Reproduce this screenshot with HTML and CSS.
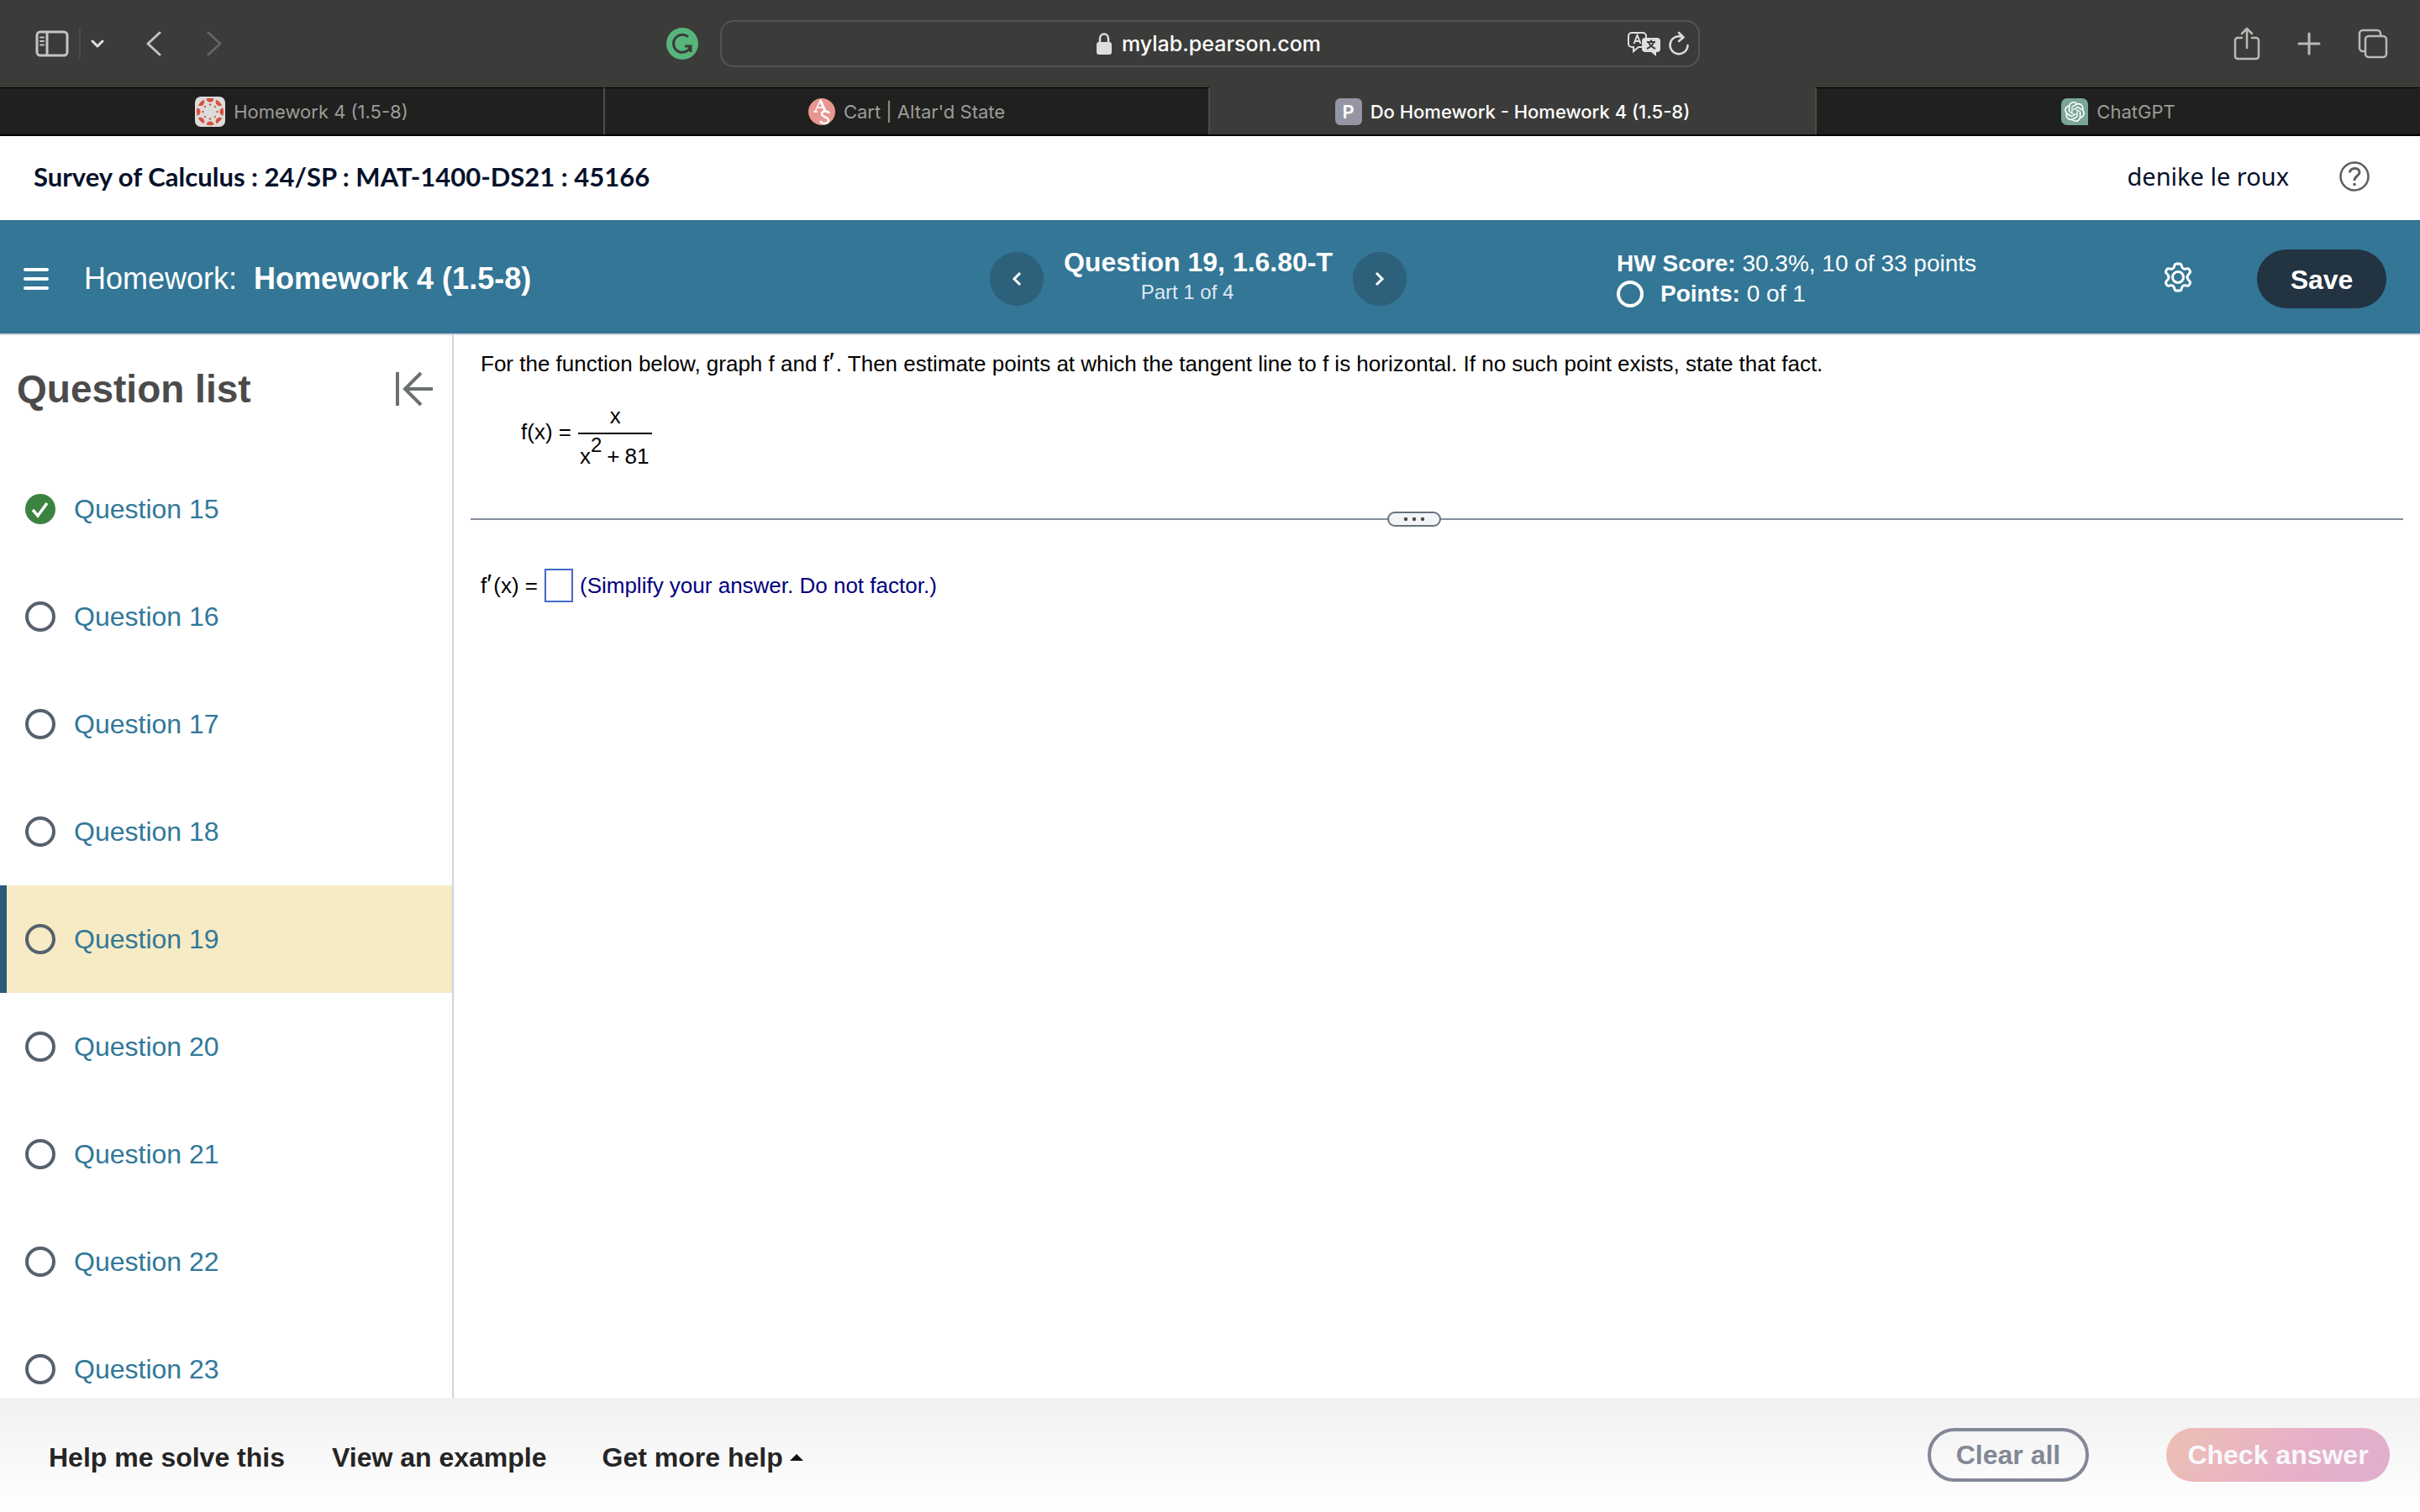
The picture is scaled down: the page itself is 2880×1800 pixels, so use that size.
FILE: index.html
```html
<!DOCTYPE html>
<html lang="en">
<head>
<meta charset="utf-8">
<title>Do Homework - Homework 4 (1.5-8)</title>
<link rel="stylesheet" href="styles.css">
</head>
<body>
<div class="browser">
  <div class="toolbar">
    <div class="toolbar-left">
      <button class="icon-btn" aria-label="Sidebar"><svg width="40" height="32" viewBox="0 0 40 32" fill="none" stroke="#c4c4c3" stroke-width="3"><rect x="2" y="2" width="36" height="28" rx="4"/><path d="M14 2v28"/><path d="M6 8.500h4M6 13h4M6 17.500h4" stroke-width="2" stroke-linecap="round"/></svg></button>
      <span class="toolbar-rule"></span>
      <button class="icon-btn" aria-label="Tab groups"><svg width="16" height="12" viewBox="0 0 16 12" fill="none" stroke="#e0e0df" stroke-width="3" stroke-linecap="round" stroke-linejoin="round"><path d="M2 3l6 6 6-6"/></svg></button>
      <button class="icon-btn back" aria-label="Back"><svg width="18" height="30" viewBox="0 0 18 30" fill="none" stroke="#c4c4c3" stroke-width="3" stroke-linecap="round" stroke-linejoin="round"><path d="M16 2L2 15l14 13"/></svg></button>
      <button class="icon-btn forward" aria-label="Forward"><svg width="18" height="30" viewBox="0 0 18 30" fill="none" stroke="#636362" stroke-width="3" stroke-linecap="round" stroke-linejoin="round"><path d="M2 2l14 13L2 28"/></svg></button>
      <button class="icon-btn grammar" aria-label="Grammarly"><svg width="38" height="38" viewBox="0 0 38 38"><circle cx="19" cy="19" r="19" fill="#57b57b"/><path d="M26 11a10.500 10.500 0 1 0 3 11h-7M29 22v7" fill="none" stroke="#3b3b39" stroke-width="3"/></svg></button>
    </div>
    <div class="address">
      <span></span>
      <label class="address-site">
        <svg width="18" height="26" viewBox="0 0 18 26"><rect y="11" width="18" height="15" rx="3" fill="#dededd"/><path d="M4 12V7a5 5.500 0 0 1 10 0v5" fill="none" stroke="#dededd" stroke-width="2.500"/></svg>
        <input class="address-input" aria-label="Address" value="mylab.pearson.com">
      </label>
      <div class="address-tools">
        <button class="icon-btn" aria-label="Translate"><svg width="40" height="30" viewBox="0 0 40 30"><path d="M5 2h13a4 4 0 0 1 4 4v4M5 2a4 4 0 0 0-4 4v9a4 4 0 0 0 4 4h2v5l6-5h4" fill="none" stroke="#dededd" stroke-width="2"/><path d="M7.500 15L11.500 5l4 10M9 12h5" fill="none" stroke="#dededd" stroke-width="2"/><path d="M21 8h14a4 4 0 0 1 4 4v9a4 4 0 0 1-4 4h-1v5l-6-5h-7a4 4 0 0 1-4-4v-9a4 4 0 0 1 4-4z" fill="#dededd"/><path d="M23 13h10M28 10.500V13M31 13c-1 4-4 6-8 8M25 13c1 4 4 6 8 8" fill="none" stroke="#3b3b39" stroke-width="2"/></svg></button>
        <button class="icon-btn" aria-label="Reload"><svg width="26" height="30" viewBox="0 0 26 30" fill="none" stroke="#dededd" stroke-width="2.500" stroke-linecap="round" stroke-linejoin="round"><path d="M23.500 17A10.500 10.500 0 1 1 18 7.500M13 2l5.500 5.500L13 12"/></svg></button>
      </div>
    </div>
    <div class="toolbar-right">
      <button class="icon-btn" aria-label="Share"><svg width="32" height="40" viewBox="0 0 32 40" fill="none" stroke="#b9b9b8" stroke-width="2.500" stroke-linecap="round" stroke-linejoin="round"><path d="M10 13H5a3 3 0 0 0-3 3v19a3 3 0 0 0 3 3h22a3 3 0 0 0 3-3V16a3 3 0 0 0-3-3h-5M16 25V2M10 8l6-6 6 6"/></svg></button>
      <button class="icon-btn" aria-label="New tab"><svg width="28" height="28" viewBox="0 0 28 28" fill="none" stroke="#b9b9b8" stroke-width="3" stroke-linecap="round"><path d="M14 2v24M2 14h24"/></svg></button>
      <button class="icon-btn" aria-label="Show tabs"><svg width="36" height="36" viewBox="0 0 36 36" fill="none" stroke="#b9b9b8" stroke-width="2.500"><rect x="9" y="9" width="25" height="25" rx="4"/><path d="M9 27H6a4 4 0 0 1-4-4V6a4 4 0 0 1 4-4h17a4 4 0 0 1 4 4v3"/></svg></button>
    </div>
  </div>
  <nav class="tabs" aria-label="Tabs">
    <a class="tab" href="#t1"><svg width="36" height="36" viewBox="0 0 36 36"><rect width="36" height="36" rx="7" fill="#dcdcda"/><g fill="#d9503c"><g id="petal"><path d="M13.500 2.500a15.500 15.500 0 0 1 9 0a4.500 4 0 0 1-9 0z"/><circle cx="18" cy="9.500" r="1.200"/></g><use href="#petal" transform="rotate(45 18 18)"/><use href="#petal" transform="rotate(90 18 18)"/><use href="#petal" transform="rotate(135 18 18)"/><use href="#petal" transform="rotate(180 18 18)"/><use href="#petal" transform="rotate(225 18 18)"/><use href="#petal" transform="rotate(270 18 18)"/><use href="#petal" transform="rotate(315 18 18)"/></g></svg><span>Homework 4 (1.5-8)</span></a>
    <a class="tab" href="#t2"><svg width="32" height="32" viewBox="0 0 32 32"><circle cx="16" cy="16" r="16" fill="#e8968f"/><g fill="none" stroke="#fff"><path d="M8 16l6-13" stroke-width="1.500"/><path d="M14 2l6 13" stroke-width="3"/><path d="M10 11h7M6 16h5M17 16h6" stroke-width="1.500"/><path d="M25 18c-2-4-10-3-9 1 1 4 9 3 8 8-1 4-8 4-10 0" stroke-width="2.500"/></g></svg><span>Cart | Altar'd State</span></a>
    <a class="tab tab-active" href="#t3"><span class="favicon-p">P</span><span>Do Homework - Homework 4 (1.5-8)</span></a>
    <a class="tab" href="#t4"><svg width="32" height="32" viewBox="0 0 32 32"><path d="M7 0h18a7 7 0 0 1 7 7v25H7a7 7 0 0 1-7-7V7a7 7 0 0 1 7-7z" fill="#7ba697"/><g transform="translate(4 4)" fill="#fff"><path d="M22.282 9.821a5.985 5.985 0 0 0-.516-4.910 6.046 6.046 0 0 0-6.510-2.900A6.065 6.065 0 0 0 4.981 4.182a5.985 5.985 0 0 0-3.998 2.900 6.046 6.046 0 0 0 .743 7.097 5.980 5.980 0 0 0 .510 4.911 6.051 6.051 0 0 0 6.515 2.900A5.985 5.985 0 0 0 13.260 24a6.056 6.056 0 0 0 5.772-4.206 5.990 5.990 0 0 0 3.997-2.900 6.056 6.056 0 0 0-.747-7.073zM13.260 22.430a4.476 4.476 0 0 1-2.876-1.040l.141-.081 4.779-2.758a.795.795 0 0 0 .392-.681v-6.737l2.020 1.168a.071.071 0 0 1 .038.052v5.583a4.504 4.504 0 0 1-4.494 4.494zM3.600 18.304a4.470 4.470 0 0 1-.535-3.014l.142.085 4.783 2.759a.771.771 0 0 0 .780 0l5.843-3.369v2.332a.080.080 0 0 1-.033.062L9.740 19.950a4.500 4.500 0 0 1-6.140-1.646zM2.340 7.896a4.485 4.485 0 0 1 2.366-1.973V11.600a.766.766 0 0 0 .388.676l5.815 3.355-2.020 1.168a.076.076 0 0 1-.071 0l-4.830-2.786A4.504 4.504 0 0 1 2.340 7.872zm16.597 3.855l-5.833-3.387L15.119 7.200a.076.076 0 0 1 .071 0l4.830 2.791a4.494 4.494 0 0 1-.676 8.105v-5.678a.790.790 0 0 0-.407-.667zm2.010-3.023l-.141-.085-4.774-2.782a.776.776 0 0 0-.785 0L9.409 9.230V6.897a.066.066 0 0 1 .028-.061l4.830-2.787a4.500 4.500 0 0 1 6.680 4.660zm-12.640 4.135l-2.020-1.164a.080.080 0 0 1-.038-.057V6.075a4.500 4.500 0 0 1 7.375-3.453l-.142.080L8.704 5.460a.795.795 0 0 0-.393.681zm1.097-2.365l2.602-1.500 2.607 1.500v2.999l-2.597 1.500-2.607-1.500z"/></g></svg><span>ChatGPT</span></a>
  </nav>
</div>

<header class="course">
  <h1 class="course-name">Survey of Calculus : 24/SP : MAT-1400-DS21 : 45166</h1>
  <div class="course-user">
    <span class="user-name">denike le roux</span>
    <button class="icon-btn" aria-label="Help"><svg width="36" height="36" viewBox="0 0 36 36" fill="none" stroke="#5c5f60" stroke-width="2.500"><circle cx="18" cy="18" r="16.500"/><path d="M12.500 13.500c0-7 11.500-6.500 11.500-.5 0 4.500-6 4.500-6 10" stroke-width="3"/><circle cx="18" cy="27.500" r="1.800" fill="#5c5f60" stroke="none"/></svg></button>
  </div>
</header>

<div class="assignment">
  <div class="assignment-title">
    <button class="icon-btn" aria-label="Menu"><svg width="30" height="28" viewBox="0 0 30 28" stroke="#fff" stroke-width="4" stroke-linecap="round"><path d="M2 3h26M2 14h26M2 25h26"/></svg></button>
    <h2 class="title-text"><span>Homework:</span><strong>Homework 4 (1.5-8)</strong></h2>
  </div>
  <div class="pager">
    <button class="pager-btn" aria-label="Previous question"><svg width="12" height="18" viewBox="0 0 12 18" fill="none" stroke="#fff" stroke-width="3"><path d="M10 2L3 9l7 7"/></svg></button>
    <div class="pager-text"><strong>Question 19, 1.6.80-T</strong><span class="pager-part">Part 1 of 4</span></div>
    <button class="pager-btn" aria-label="Next question"><svg width="12" height="18" viewBox="0 0 12 18" fill="none" stroke="#fff" stroke-width="3"><path d="M2 2l7 7-7 7"/></svg></button>
  </div>
  <div class="assignment-side">
    <div class="score">
      <p><strong>HW Score:</strong> 30.3%, 10 of 33 points</p>
      <p class="score-points"><svg width="32" height="32" viewBox="0 0 32 32" fill="none" stroke="#fff" stroke-width="4"><circle cx="16" cy="16" r="14"/></svg><span><strong>Points:</strong> 0 of 1</span></p>
    </div>
    <div class="assignment-actions">
      <button class="settings" aria-label="Settings"><svg width="36" height="36" viewBox="0 0 36 36" fill="none" stroke="#fff" stroke-width="3" stroke-linecap="round" stroke-linejoin="round"><circle cx="18" cy="18" r="6.500"/><path id="gear" d="M18 2h2q1.500 0 2 1.500l.6 2.200q.7 2 2.700 2.600 1 .2 2.200-.2l1.500-.4q1.500-.3 2.300 1l1 1.800q.8 1.300-.3 2.500l-1.600 1.700q-1.400 1.600-1.400 3.300"/><use href="#gear" transform="matrix(-1 0 0 1 36 0)"/><use href="#gear" transform="matrix(1 0 0 -1 0 36)"/><use href="#gear" transform="matrix(-1 0 0 -1 36 36)"/></svg></button>
      <button class="save">Save</button>
    </div>
  </div>
</div>

<div class="workspace">
  <aside class="sidebar">
    <div class="sidebar-head">
      <h2 class="sidebar-title">Question list</h2>
      <button class="icon-btn" aria-label="Collapse question list"><svg width="46" height="42" viewBox="0 0 46 42" fill="none" stroke="#6a7070" stroke-width="4"><path d="M3 1v40M45 21H12M31 2L12 21l19 19"/></svg></button>
    </div>
    <ul class="questions">
      <li class="question"><svg width="36" height="36" viewBox="0 0 36 36"><circle cx="18" cy="18" r="18" fill="#3a8340"/><path d="M9 19l6 7L26 11" fill="none" stroke="#fff" stroke-width="3.500"/></svg><a href="#q15">Question 15</a></li>
      <li class="question"><svg class="ring" width="36" height="36"><circle cx="18" cy="18" r="16"/></svg><a href="#q16">Question 16</a></li>
      <li class="question"><svg class="ring" width="36" height="36"><circle cx="18" cy="18" r="16"/></svg><a href="#q17">Question 17</a></li>
      <li class="question"><svg class="ring" width="36" height="36"><circle cx="18" cy="18" r="16"/></svg><a href="#q18">Question 18</a></li>
      <li class="question question-current"><svg class="ring" width="36" height="36"><circle cx="18" cy="18" r="16"/></svg><a href="#q19">Question 19</a></li>
      <li class="question"><svg class="ring" width="36" height="36"><circle cx="18" cy="18" r="16"/></svg><a href="#q20">Question 20</a></li>
      <li class="question"><svg class="ring" width="36" height="36"><circle cx="18" cy="18" r="16"/></svg><a href="#q21">Question 21</a></li>
      <li class="question"><svg class="ring" width="36" height="36"><circle cx="18" cy="18" r="16"/></svg><a href="#q22">Question 22</a></li>
      <li class="question"><svg class="ring" width="36" height="36"><circle cx="18" cy="18" r="16"/></svg><a href="#q23">Question 23</a></li>
    </ul>
  </aside>
  <main class="exercise">
    <p class="prompt">For the function below, graph f and f<span class="prime">′</span>. Then estimate points at which the tangent line to f is horizontal. If no such point exists, state that fact.</p>
    <div class="formula">
      <span class="formula-name">f(x) =</span>
      <span class="fraction"><span class="numerator">x</span><span class="denominator"><span>x<sup>2</sup></span><span>+</span><span>81</span></span></span>
    </div>
    <div class="splitter"><button class="splitter-grip" aria-label="Resize"><svg width="26" height="6" viewBox="0 0 26 6" fill="#4a4a4a"><circle cx="3" cy="3" r="2.200"/><circle cx="13" cy="3" r="2.200"/><circle cx="23" cy="3" r="2.200"/></svg></button></div>
    <div class="answer">
      <label class="answer-label" for="answer">f<span class="prime">′</span>(x) =</label>
      <input class="answer-box" id="answer" type="text">
      <span class="hint">(Simplify your answer. Do not factor.)</span>
    </div>
  </main>
</div>

<footer class="actions">
  <div class="help-links">
    <button class="help-link">Help me solve this</button>
    <button class="help-link">View an example</button>
    <button class="help-link help-more">Get more help<svg width="16" height="8" viewBox="0 0 16 8"><path d="M0 8l8-8 8 8z" fill="#111"/></svg></button>
  </div>
  <div class="submit-buttons">
    <button class="clear">Clear all</button>
    <button class="check">Check answer</button>
  </div>
</footer>
</body>
</html>
```
FILE: styles.css
```css
* {
  box-sizing: border-box;
}

body {
  display: flex;
  flex-direction: column;
  height: 100vh;
  margin: 0;
  overflow: hidden;
  background: #fff;
  color: #000;
  font-family: "Liberation Sans", Arial, sans-serif;
  font-size: 26px;
}

h1, h2, p, ul {
  margin: 0;
  padding: 0;
}

ul {
  list-style: none;
}

a {
  color: inherit;
  text-decoration: none;
}

svg {
  display: block;
  flex: none;
}

button {
  padding: 0;
  border: 0;
  background: none;
  color: inherit;
  font: inherit;
}

/* Browser window */
.browser {
  flex: none;
  background: #3b3b39;
  font-family: Inter, "Noto Sans", sans-serif;
}

.toolbar {
  display: grid;
  grid-template-columns: 1fr minmax(0, 1166px) 1fr;
  align-items: center;
  height: 104px;
}

.toolbar-left,
.toolbar-right {
  display: flex;
  align-items: center;
}

.toolbar-left {
  padding: 0 26px 0 42px;
}

.toolbar-rule {
  width: 2px;
  height: 36px;
  margin: 0 12px;
  background: #4b4b4a;
}

.back {
  margin-left: 50px;
}

.forward {
  margin-left: 54px;
}

.grammar {
  margin-left: auto;
}

.toolbar-right {
  justify-content: flex-end;
  gap: 44px;
  padding-right: 38px;
}

.address {
  display: grid;
  grid-template-columns: 1fr auto 1fr;
  align-items: center;
  height: 56px;
  padding: 0 10px;
  border: 2px solid #545452;
  border-radius: 16px;
}

.address-site {
  display: flex;
  align-items: center;
  gap: 12px;
}

.address-input {
  width: 240px;
  padding: 0;
  border: 0;
  background: none;
  color: #fff;
  font: 500 25px/32px Inter, "Noto Sans", sans-serif;
}

.address-tools {
  display: flex;
  align-items: center;
  justify-content: flex-end;
  gap: 8px;
}

.tabs {
  display: grid;
  grid-template-columns: repeat(4, 1fr);
  height: 58px;
  border-bottom: 2px solid #000;
}

.tab {
  display: flex;
  align-items: center;
  justify-content: center;
  gap: 10px;
  border-top: 1px solid #000;
  border-right: 2px solid #4b4b4a;
  background: #20201e;
  color: #9c9c9a;
  font-size: 22px;
}

.tab:last-child {
  border-right: 0;
  border-left: 2px solid #4b4b4a;
}

.tab-active {
  border-top-color: #3b3b39;
  border-right: 0;
  background: #3b3b39;
  color: #fff;
  font-weight: 500;
}

.favicon-p {
  width: 32px;
  border-radius: 6px;
  background: #9595a3;
  font-weight: 600;
  line-height: 32px;
  text-align: center;
}

/* Course header */
.course {
  display: flex;
  flex: none;
  align-items: center;
  justify-content: space-between;
  height: 100px;
  padding: 0 60px 4px 40px;
  color: #05112a;
}

.course-name {
  font: 700 31px/40px Lato, sans-serif;
}

.course-user {
  display: flex;
  align-items: center;
  gap: 60px;
}

.user-name {
  font: 29px/40px "Noto Sans", sans-serif;
}

/* Assignment bar */
.assignment {
  display: grid;
  flex: none;
  grid-template-columns: 1fr auto 1fr;
  align-items: center;
  height: 137px;
  padding: 4px 40px 0 12px;
  border-bottom: 2px solid #cfd3e0;
  background: #337696;
  color: #fff;
}

.assignment-title {
  display: flex;
  align-items: center;
  gap: 42px;
  padding-left: 16px;
}

.title-text {
  display: flex;
  gap: 20px;
  font-size: 36px;
  font-weight: 400;
  line-height: 40px;
}

.pager {
  display: flex;
  align-items: center;
  gap: 24px;
}

.pager-btn {
  display: grid;
  place-items: center;
  width: 64px;
  height: 64px;
  border-radius: 50%;
  background: #2d607b;
}

.pager-text {
  display: flex;
  flex-direction: column;
  align-items: center;
  padding-bottom: 4px;
  font-size: 32px;
  line-height: 36px;
}

.pager-part {
  padding-right: 26px;
  color: #dfe8f2;
  font-size: 24px;
}

.assignment-side {
  display: flex;
  align-items: center;
  justify-content: space-between;
  padding-left: 250px;
}

.score {
  font-size: 28px;
  line-height: 36px;
}

.score-points {
  display: flex;
  align-items: center;
  gap: 20px;
}

.assignment-actions {
  display: flex;
  align-items: center;
  gap: 76px;
}

.settings {
  padding-bottom: 4px;
}

.save {
  width: 154px;
  height: 70px;
  padding-top: 4px;
  border-radius: 36px;
  background: #223342;
  font-size: 32px;
  font-weight: 700;
}

/* Question list */
.workspace {
  display: flex;
  flex: 1;
  min-height: 0;
}

.sidebar {
  flex: none;
  width: 540px;
  overflow: hidden;
  border-right: 2px solid #cfd3e0;
}

.sidebar-head {
  display: flex;
  align-items: center;
  justify-content: space-between;
  height: 143px;
  padding: 0 22px 16px 20px;
}

.sidebar-title {
  color: #4b4b4b;
  font-size: 46px;
}

.question {
  display: flex;
  align-items: center;
  gap: 22px;
  height: 128px;
  padding-left: 30px;
  color: #31789a;
  font-size: 32px;
}

.question-current {
  padding-left: 22px;
  border-left: 8px solid #275d78;
  background: #f7ebc5;
}

.ring {
  fill: none;
  stroke: #56616e;
  stroke-width: 4px;
}

/* Exercise */
.exercise {
  flex: 1;
  padding: 20px 20px 0;
  line-height: 28px;
}

.prompt {
  padding-left: 12px;
}

.prime {
  padding-right: 2px;
  font-size: 32px;
  line-height: 0;
}

.formula {
  display: flex;
  align-items: center;
  gap: 8px;
  padding: 34px 0 0 60px;
}

.formula-name {
  padding-bottom: 10px;
}

.fraction {
  display: flex;
  flex-direction: column;
  text-align: center;
}

.numerator {
  padding-bottom: 6px;
  border-bottom: 2px solid #000;
}

.denominator {
  display: flex;
  gap: 6px;
  padding: 12px 4px 0 2px;
}

.denominator sup {
  font-size: 24px;
  line-height: 0;
  vertical-align: 14px;
}

.splitter {
  display: grid;
  place-items: center;
  height: 18px;
  margin-top: 52px;
  padding-right: 54px;
  background: linear-gradient(#868da0, #868da0) center / 100% 2px no-repeat;
}

.splitter-grip {
  display: grid;
  place-items: center;
  width: 64px;
  height: 18px;
  border: 2px solid #66727f;
  border-radius: 9px;
  background: #f3f4f8;
}

.answer {
  display: flex;
  align-items: center;
  gap: 8px;
  margin-top: 50px;
  padding-left: 12px;
}

.answer-box {
  width: 34px;
  height: 40px;
  padding: 0;
  border: 2px solid #4169c8;
  font: inherit;
}

.hint {
  color: #000080;
}

/* Bottom actions */
.actions {
  display: flex;
  flex: none;
  align-items: center;
  justify-content: space-between;
  height: 136px;
  padding: 0 36px 0 58px;
  background: linear-gradient(#f1f1f1, #fff);
  color: #252525;
  font-size: 32px;
  font-weight: 700;
}

.help-links {
  display: flex;
  gap: 56px;
  padding-top: 6px;
}

.help-more {
  display: flex;
  align-items: center;
  gap: 8px;
  padding-left: 10px;
}

.submit-buttons {
  display: flex;
  gap: 92px;
}

.clear,
.check {
  height: 64px;
  border-radius: 32px;
}

.clear {
  width: 192px;
  border: 4px solid #828896;
  color: #828896;
}

.check {
  width: 266px;
  background: linear-gradient(120deg, #edbfb3, #e7b0c9 60%, #dfaecf);
  color: #f8f8fb;
}
```
